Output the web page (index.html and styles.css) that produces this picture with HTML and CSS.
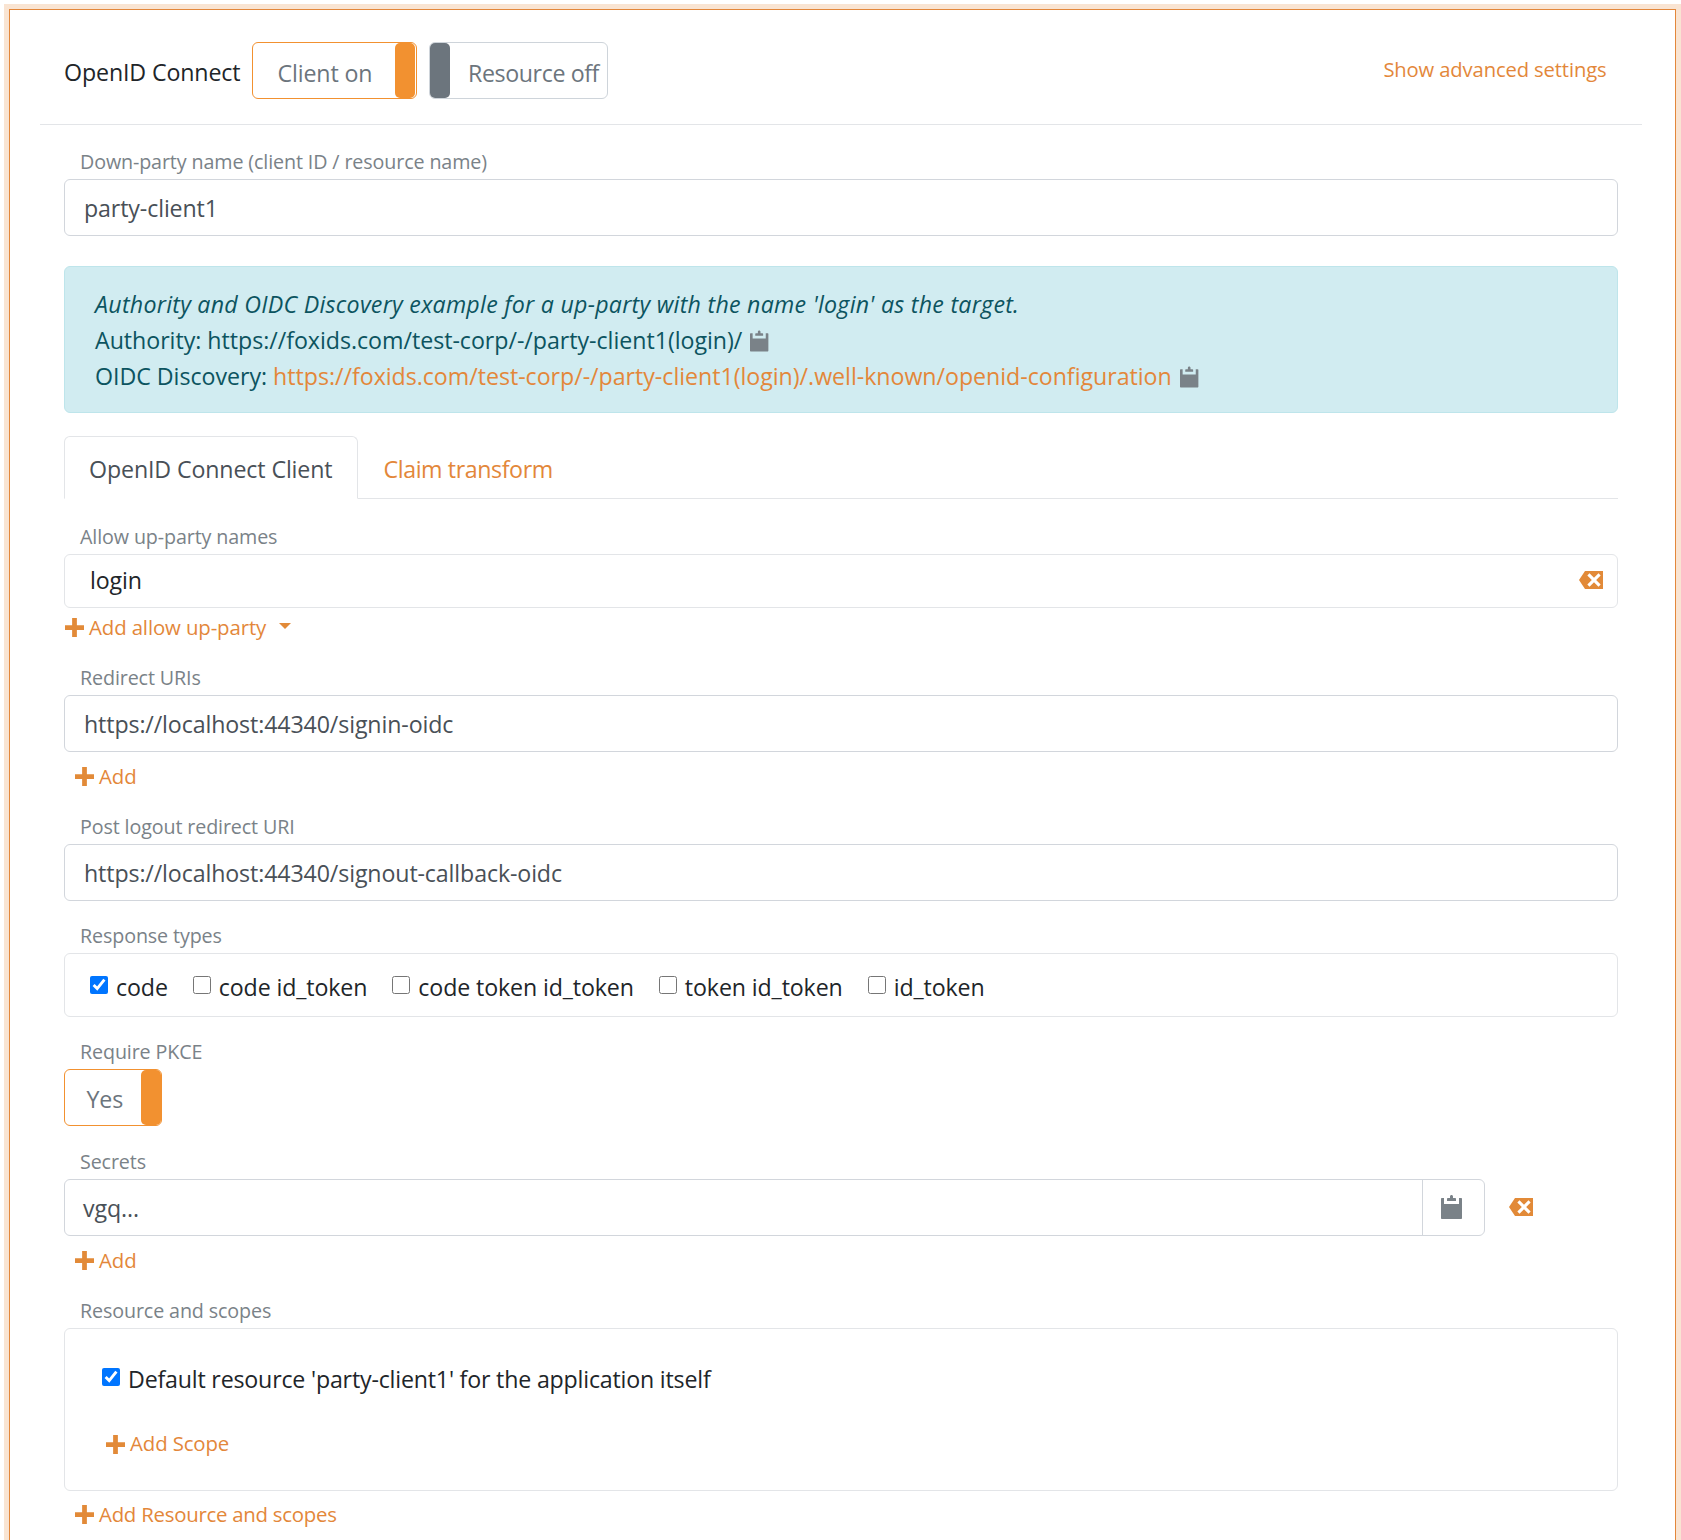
FILE: index.html
```html
<!DOCTYPE html>
<html lang="en">
<head>
<meta charset="utf-8">
<title>OpenID Connect down-party</title>
<link rel="stylesheet" href="styles.css">
</head>
<body>
<svg class="defs" width="0" height="0" aria-hidden="true">
  <symbol id="i-plus" viewBox="0 0 8 8"><path d="M3 0v3h-3v2h3v3h2v-3h3v-2h-3v-3h-2z"/></symbol>
  <symbol id="i-clip" viewBox="0 0 8 8"><path d="M3.5 0c-.28 0-.5.22-.5.5v.5h-.75c-.12 0-.25.13-.25.25v.75h3v-.75c0-.13-.13-.25-.25-.25h-.75v-.5c0-.28-.22-.5-.5-.5zm-3.25 1c-.14 0-.25.11-.25.25v6.5c0 .14.11.25.25.25h6.5c.14 0 .25-.11.25-.25v-6.5c0-.14-.11-.25-.25-.25h-.75v2h-5v-2h-.75z"/></symbol>
  <symbol id="i-del" viewBox="0 0 8 8"><path d="M2 1l-2 3 2 3h6v-6h-6zm1.5.78l1.5 1.5 1.5-1.5.72.72-1.5 1.5 1.5 1.5-.72.72-1.5-1.5-1.5 1.5-.72-.72 1.5-1.5-1.5-1.5.72-.72z"/></symbol>
</svg>
<main class="frame">
  <header class="head">
    <h1 class="title">OpenID Connect</h1>
    <div class="toggle toggle-on toggle-client"><span class="toggle-text">Client on</span><span class="handle"></span></div>
    <div class="toggle toggle-off toggle-resource"><span class="handle"></span><span class="toggle-text">Resource off</span></div>
    <a class="advanced" href="#">Show advanced settings</a>
  </header>

  <section class="content">
    <div class="group first">
      <label class="lbl">Down-party name (client ID / resource name)</label>
      <div class="input">party-client1</div>
    </div>

    <div class="alert">
      <div><em>Authority and OIDC Discovery example for a up-party with the name 'login' as the target.</em></div>
      <div>Authority: https://foxids.com/test-corp/-/party-client1(login)/ <svg class="clip-sm"><use href="#i-clip"/></svg></div>
      <div>OIDC Discovery: <a href="#">https://foxids.com/test-corp/-/party-client1(login)/.well-known/openid-configuration</a> <svg class="clip-sm"><use href="#i-clip"/></svg></div>
    </div>

    <nav class="tabs">
      <a class="tab active" href="#">OpenID Connect Client</a>
      <a class="tab tab-claim" href="#">Claim transform</a>
    </nav>

    <div class="group after-tabs">
      <label class="lbl">Allow up-party names</label>
      <div class="chip-field"><span class="chip">login</span><svg class="del"><use href="#i-del"/></svg></div>
      <a class="add flush" href="#"><svg class="plus"><use href="#i-plus"/></svg>Add allow up-party<span class="caret"></span></a>
    </div>

    <div class="group tight">
      <label class="lbl">Redirect URIs</label>
      <div class="input">https://localhost:44340/signin-oidc</div>
      <a class="add" href="#"><svg class="plus"><use href="#i-plus"/></svg>Add</a>
    </div>

    <div class="group tight">
      <label class="lbl">Post logout redirect URI</label>
      <div class="input">https://localhost:44340/signout-callback-oidc</div>
    </div>

    <div class="group">
      <label class="lbl">Response types</label>
      <div class="checks">
        <label class="check"><input type="checkbox" checked>code</label>
        <label class="check"><input type="checkbox">code id_token</label>
        <label class="check"><input type="checkbox">code token id_token</label>
        <label class="check"><input type="checkbox">token id_token</label>
        <label class="check"><input type="checkbox">id_token</label>
      </div>
    </div>

    <div class="group">
      <label class="lbl">Require PKCE</label>
      <div class="toggle toggle-on toggle-yes"><span class="toggle-text">Yes</span><span class="handle"></span></div>
    </div>

    <div class="group secrets">
      <label class="lbl">Secrets</label>
      <div class="secret-row">
        <div class="secret">
          <div class="secret-value">vgq...</div>
          <div class="secret-copy"><svg class="clip-lg"><use href="#i-clip"/></svg></div>
        </div>
        <svg class="del"><use href="#i-del"/></svg>
      </div>
      <a class="add" href="#"><svg class="plus"><use href="#i-plus"/></svg>Add</a>
    </div>

    <div class="group tight">
      <label class="lbl">Resource and scopes</label>
      <div class="resource">
        <label class="check resource-check"><input type="checkbox" checked>Default resource 'party-client1' for the application itself</label>
        <a class="add scope" href="#"><svg class="plus"><use href="#i-plus"/></svg>Add Scope</a>
      </div>
      <a class="add add-last" href="#"><svg class="plus"><use href="#i-plus"/></svg>Add Resource and scopes</a>
    </div>
  </section>
</main>
</body>
</html>
```
FILE: styles.css
```css
* { box-sizing: border-box; }
html, body { margin: 0; padding: 0; height: 1540px; overflow: hidden; background: #fff; }
body {
  font-family: "Open Sans", "Noto Sans", sans-serif;
  font-size: 23.2px;
  letter-spacing: -0.12px;
  line-height: 36px;
  color: #495057;
}
a { color: #e3873a; text-decoration: none; }
em { letter-spacing: .26px; }
.defs { position: absolute; }

.frame {
  margin: 9px 5px 0 9px;
  padding: 0 33.5px 0 30px;
  height: 1560px;
  border: 1.5px solid #e3873a;
  box-shadow: 0 0 0 5px #f9e4d2;
}

.head {
  display: flex;
  align-items: center;
  height: 114.5px;
  padding: 6px 24px 0;
  border-bottom: 1.5px solid #e3e5e8;
}
.title { margin: 5px 11px 0 0; font: inherit; color: #212529; }
.advanced { margin: -1px 11px 0 auto; font-size: 20.2px; }

.toggle {
  display: flex;
  align-items: center;
  justify-content: space-between;
  height: 57px;
  border-radius: 6px;
  border: 1.5px solid;
  background: #fff;
  color: #6c757d;
}
.head .toggle { margin-top: 1px; }
.toggle-text { padding-top: 4px; }
.head .toggle-text { padding-top: 5px; }
.toggle-on { border-color: #f29130; }
.toggle-off { border-color: #ced4da; margin-left: 12px; }
.toggle-client { width: 165px; padding-left: 25px; }
.toggle-resource { width: 179px; }
.toggle-yes { width: 98px; padding-left: 21.5px; }
.toggle-resource .toggle-text { margin-right: 7.5px; letter-spacing: -.4px; }
.toggle .handle {
  width: 20px;
  height: 100%;
  border-radius: 5px;
  background: #f29130;
}
.toggle-on .handle { margin-right: .5px; }
.toggle-off .handle { background: #6c757d; }

.content { padding: 0 24px; }
.group { margin-top: 23px; }
.group.first { margin-top: 25px; }
.group.after-tabs { margin-top: 25.5px; }
.group.tight { margin-top: 20px; }
.group.secrets { margin-top: 24px; }
.lbl {
  display: block;
  height: 29px;
  padding-left: 16px;
  font-size: 19.7px;
  line-height: 24px;
  color: #7a8288;
}

.input, .secret {
  height: 57px;
  border: 1.5px solid #d2d6dc;
  border-radius: 6px;
  line-height: 57.5px;
}
.input { padding-left: 19px; }

.alert {
  margin-top: 30px;
  padding: 19.5px 30px 0;
  height: 147px;
  background: #d1ecf1;
  border: 1.5px solid #bee5eb;
  border-radius: 6px;
  color: #0c5460;
  letter-spacing: -.03px;
}
.clip-sm { width: 21px; height: 22px; margin-left: 2px; vertical-align: -3px; fill: #7a8288; }

.tabs {
  display: flex;
  margin-top: 23px;
  height: 63.5px;
  border-bottom: 1.5px solid #e3e5e8;
}
.tab {
  height: 63.5px;
  padding: 14.5px 24px 0;
  border: 1.5px solid transparent;
  border-radius: 6px 6px 0 0;
}
.tab-claim { letter-spacing: -.4px; padding-left: 25px; }
.tab.active {
  color: #495057;
  background: #fff;
  border-color: #e3e5e8 #e3e5e8 #fff;
}

.chip-field {
  display: flex;
  align-items: center;
  justify-content: space-between;
  height: 54px;
  padding: 0 14px 2px 25px;
  border: 1.5px solid #e3e5e8;
  border-radius: 6px;
  color: #212529;
}
.del { width: 24px; height: 24px; fill: #e28a38; flex: none; }

.add {
  display: flex;
  align-items: center;
  height: 36px;
  margin-top: 7px;
  margin-left: 11px;
  padding-bottom: 2px;
  font-size: 20.4px;
  line-height: 36px;
}
.add.flush { margin-top: 2px; margin-left: 1px; }
.add.add-last { margin-top: 6px; letter-spacing: -.25px; }
.plus { width: 19px; height: 19px; margin: 2px 5px 0 0; fill: #e28a38; flex: none; }
.caret {
  width: 0;
  height: 0;
  margin-left: 13px;
  margin-top: -1px;
  border-top: 6px solid #e28a38;
  border-left: 6px solid transparent;
  border-right: 6px solid transparent;
}

.checks {
  display: flex;
  align-items: center;
  gap: 25px;
  height: 64px;
  padding: 4px 25px 0;
  border: 1.5px solid #e3e5e8;
  border-radius: 6px;
  color: #212529;
}
.check { display: flex; align-items: center; }
.check input { width: 18px; height: 18px; margin: -4px 8px 0 0; flex: none; }

.secret-row { display: flex; align-items: center; gap: 24px; }
.secret { display: flex; width: 1421px; }
.secret-value { flex: 1; padding-left: 18px; }
.secret-copy {
  display: flex;
  align-items: center;
  justify-content: center;
  width: 62.5px;
  border-left: 1.5px solid #d2d6dc;
}
.clip-lg { width: 24px; height: 24px; fill: #7a8288; }

.resource {
  height: 163px;
  padding: 32.5px 37px 0;
  border: 1.5px solid #e3e5e8;
  border-radius: 6px;
}
.resource-check { height: 36px; color: #212529; letter-spacing: -.19px; }
.add.scope { margin: 29px 0 0 4px; }
```
